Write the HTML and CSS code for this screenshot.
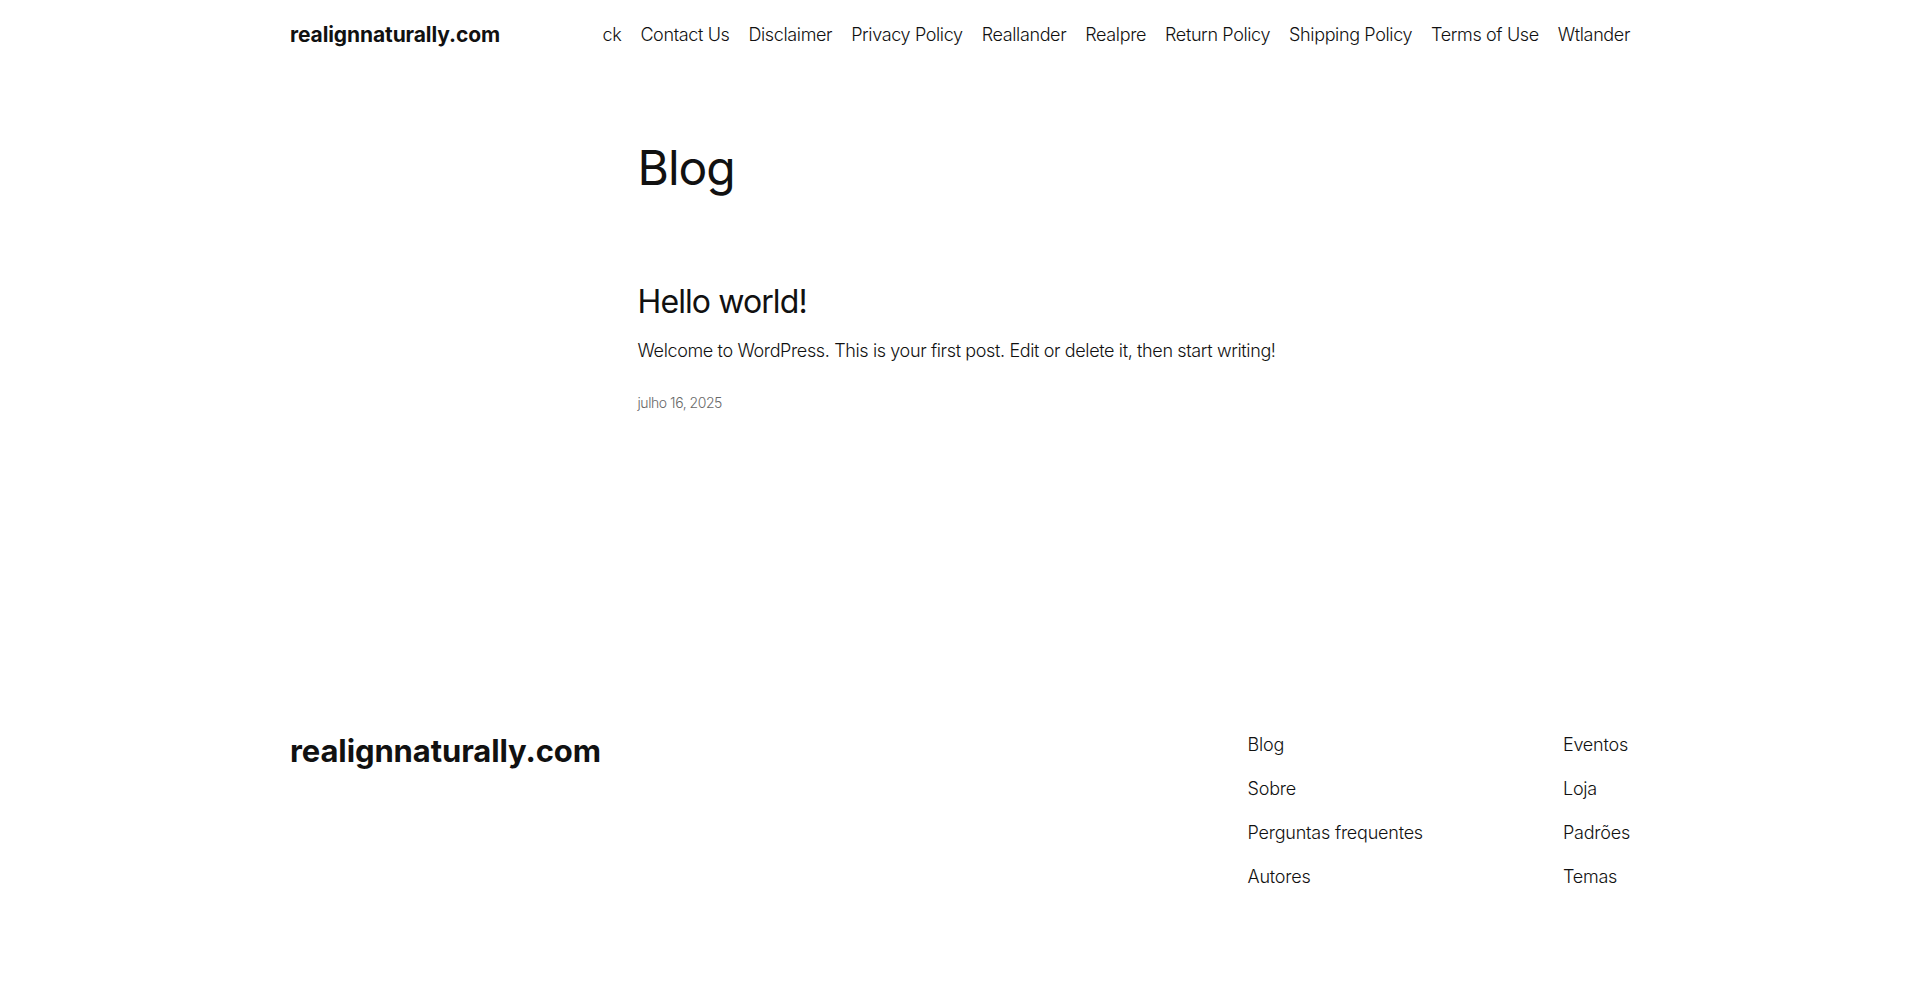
FILE: index.html
```html
<!DOCTYPE html>
<html lang="pt-BR">
<head>
    <meta charset="UTF-8">
    <meta name="viewport" content="width=device-width, initial-scale=1.0">
    <title>Blog – realignnaturally.com</title>
    <link rel="stylesheet" href="styles.css">
</head>

<body>
    <header class="site-header">
        <div class="header-inner">
            <a href="#" class="site-title">realignnaturally.com</a>
            <nav class="main-nav">
                <ul class="nav-list">
                    <li><a href="#">ck</a></li>
                    <li><a href="#">Contact Us</a></li>
                    <li><a href="#">Disclaimer</a></li>
                    <li><a href="#">Privacy Policy</a></li>
                    <li><a href="#">Reallander</a></li>
                    <li><a href="#">Realpre</a></li>
                    <li><a href="#">Return Policy</a></li>
                    <li><a href="#">Shipping Policy</a></li>
                    <li><a href="#">Terms of Use</a></li>
                    <li><a href="#">Wtlander</a></li>
                </ul>
            </nav>
        </div>
    </header>

    <main class="site-main">
        <h1 class="page-title">Blog</h1>

        <article class="post">
            <h2 class="post-title"><a href="#">Hello world!</a></h2>
            <p class="post-excerpt">Welcome to WordPress. This is your first post. Edit or delete it, then start writing!</p>
            <time class="post-date" datetime="2025-07-16">julho 16, 2025</time>
        </article>
    </main>

    <footer class="site-footer">
        <div class="footer-inner">
            <a href="#" class="footer-title">realignnaturally.com</a>
            <div class="footer-navs">
                <!-- Column 1 -->
                <ul class="footer-list">
                    <li><a href="#">Blog</a></li>
                    <li><a href="#">Sobre</a></li>
                    <li><a href="#">Perguntas frequentes</a></li>
                    <li><a href="#">Autores</a></li>
                </ul>
                <!-- Column 2 -->
                <ul class="footer-list">
                    <li><a href="#">Eventos</a></li>
                    <li><a href="#">Loja</a></li>
                    <li><a href="#">Padrões</a></li>
                    <li><a href="#">Temas</a></li>
                </ul>
            </div>
        </div>
    </footer>
</body>
</html>
```

FILE: styles.css
```css
* {
    box-sizing: border-box;
    margin: 0;
    padding: 0;
}

body {
    font-family: 'Inter', 'Noto Sans', sans-serif;
    font-weight: 300;
    font-size: 18px;
    line-height: 1.4;
    letter-spacing: -0.37px;
    color: #111111;
    background-color: #ffffff;
}

a {
    color: inherit;
    text-decoration: none;
}

ul {
    list-style: none;
}

/* Header */
.site-header {
    padding: 21px 0 22px;
}

.header-inner {
    width: 1340px;
    margin: 0 auto;
    display: flex;
    justify-content: space-between;
    align-items: center;
    line-height: 28px;
}

.site-title {
    font-weight: 700;
    font-size: 21px;
    letter-spacing: -0.1px;
}

.nav-list {
    display: flex;
    gap: 19px;
}

/* Main */
.site-main {
    width: 645px;
    margin: 0 auto;
    padding-top: 70px;
}

.page-title {
    font-size: 48px;
    font-weight: 400;
    line-height: 1.125;
    letter-spacing: -1px;
}

.post {
    margin-top: 89px;
}

.post-title {
    font-size: 32px;
    font-weight: 400;
    line-height: 1.125;
    letter-spacing: -0.9px;
}

.post-excerpt {
    margin-top: 18px;
}

.post-date {
    display: block;
    margin-top: 30px;
    font-size: 14px;
    letter-spacing: -0.45px;
    color: #686868;
}

/* Footer */
.site-footer {
    padding-top: 319px;
}

.footer-inner {
    width: 1340px;
    margin: 0 auto;
    display: flex;
    justify-content: space-between;
    align-items: flex-start;
}

.footer-title {
    font-weight: 700;
    font-size: 31px;
    line-height: 1.2;
    letter-spacing: -0.1px;
}

.footer-navs {
    display: flex;
    gap: 140px;
    letter-spacing: -0.22px;
}

.footer-list {
    display: flex;
    flex-direction: column;
    gap: 18.8px;
}
```
